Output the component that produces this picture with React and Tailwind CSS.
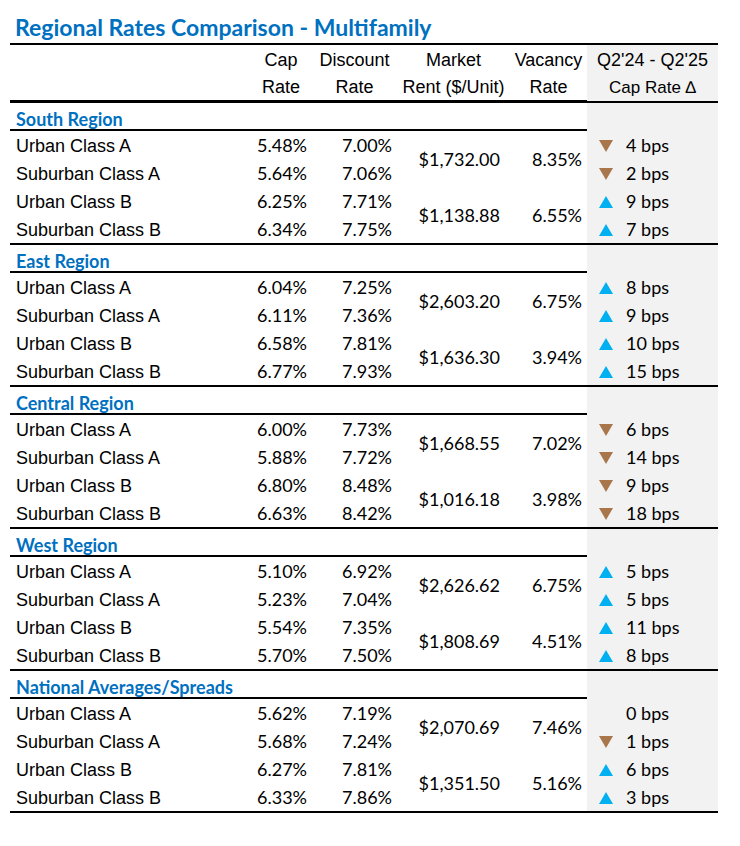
import React from 'react'

const regions = [
  {
    name: 'South Region',
    rows: [
      ['Urban Class A', '5.48%', '7.00%', 'down', '4 bps'],
      ['Suburban Class A', '5.64%', '7.06%', 'down', '2 bps'],
      ['Urban Class B', '6.25%', '7.71%', 'up', '9 bps'],
      ['Suburban Class B', '6.34%', '7.75%', 'up', '7 bps'],
    ],
    pairs: [['$1,732.00', '8.35%'], ['$1,138.88', '6.55%']],
  },
  {
    name: 'East Region',
    rows: [
      ['Urban Class A', '6.04%', '7.25%', 'up', '8 bps'],
      ['Suburban Class A', '6.11%', '7.36%', 'up', '9 bps'],
      ['Urban Class B', '6.58%', '7.81%', 'up', '10 bps'],
      ['Suburban Class B', '6.77%', '7.93%', 'up', '15 bps'],
    ],
    pairs: [['$2,603.20', '6.75%'], ['$1,636.30', '3.94%']],
  },
  {
    name: 'Central Region',
    rows: [
      ['Urban Class A', '6.00%', '7.73%', 'down', '6 bps'],
      ['Suburban Class A', '5.88%', '7.72%', 'down', '14 bps'],
      ['Urban Class B', '6.80%', '8.48%', 'down', '9 bps'],
      ['Suburban Class B', '6.63%', '8.42%', 'down', '18 bps'],
    ],
    pairs: [['$1,668.55', '7.02%'], ['$1,016.18', '3.98%']],
  },
  {
    name: 'West Region',
    rows: [
      ['Urban Class A', '5.10%', '6.92%', 'up', '5 bps'],
      ['Suburban Class A', '5.23%', '7.04%', 'up', '5 bps'],
      ['Urban Class B', '5.54%', '7.35%', 'up', '11 bps'],
      ['Suburban Class B', '5.70%', '7.50%', 'up', '8 bps'],
    ],
    pairs: [['$2,626.62', '6.75%'], ['$1,808.69', '4.51%']],
  },
  {
    name: 'National Averages/Spreads',
    rows: [
      ['Urban Class A', '5.62%', '7.19%', null, '0 bps'],
      ['Suburban Class A', '5.68%', '7.24%', 'down', '1 bps'],
      ['Urban Class B', '6.27%', '7.81%', 'up', '6 bps'],
      ['Suburban Class B', '6.33%', '7.86%', 'up', '3 bps'],
    ],
    pairs: [['$2,070.69', '7.46%'], ['$1,351.50', '5.16%']],
  },
]

const cols = 'grid grid-cols-[240px_62px_85px_113px_77px_131px]'
const arial = 'font-["Liberation_Sans",Arial,sans-serif]'
const calibri = 'font-[Lato,"Open_Sans",sans-serif]'

function Arrow({ dir }) {
  if (!dir) return <span className="w-[14px] shrink-0" />
  return dir === 'up' ? (
    <svg className="shrink-0" width="14" height="12" viewBox="0 0 14 12">
      <polygon points="7,0 14,12 0,12" fill="#00B0F0" />
    </svg>
  ) : (
    <svg className="shrink-0" width="14" height="12" viewBox="0 0 14 12">
      <polygon points="0,0 14,0 7,12" fill="#A9754A" />
    </svg>
  )
}

function Line({ thick }) {
  return <div className={thick ? 'h-[3px] bg-black' : 'h-[2px] bg-black'} />
}

function Region({ region }) {
  return (
    <>
      <div className={`${cols} h-[26px]`}>
        <div className={`col-span-5 flex items-center pl-[6px] pt-[3px] text-[18px] font-bold text-[#0070C0] ${calibri}`}>
          {region.name}
        </div>
        <div className="bg-[#F2F2F2]" />
      </div>
      <Line />
      <div className={`${cols} grid-rows-[repeat(4,28px)] text-[18px] text-black`}>
        {region.rows.map((r, i) => (
          <React.Fragment key={i}>
            <div className={`flex items-center pl-[6px] pt-[3px] ${arial}`} style={{ gridRow: i + 1, gridColumn: 1 }}>
              {r[0]}
            </div>
            <div className={`flex items-center justify-end pr-[5px] pt-[1px] ${calibri}`} style={{ gridRow: i + 1, gridColumn: 2 }}>
              {r[1]}
            </div>
            <div className={`flex items-center justify-end pr-[5px] pt-[1px] ${calibri}`} style={{ gridRow: i + 1, gridColumn: 3 }}>
              {r[2]}
            </div>
            <div
              className={`flex items-center gap-[13px] bg-[#F2F2F2] pl-[12px] pt-[1px] ${calibri}`}
              style={{ gridRow: i + 1, gridColumn: 6 }}
            >
              <Arrow dir={r[3]} />
              <span>{r[4]}</span>
            </div>
          </React.Fragment>
        ))}
        {region.pairs.map((p, j) => (
          <React.Fragment key={'p' + j}>
            <div
              className={`flex items-center justify-end pr-[10px] pt-[1px] ${calibri}`}
              style={{ gridRow: `${j * 2 + 1} / span 2`, gridColumn: 4 }}
            >
              {p[0]}
            </div>
            <div
              className={`flex items-center justify-end pr-[5px] pt-[1px] ${calibri}`}
              style={{ gridRow: `${j * 2 + 1} / span 2`, gridColumn: 5 }}
            >
              {p[1]}
            </div>
          </React.Fragment>
        ))}
      </div>
      <Line />
    </>
  )
}

export default function App() {
  return (
    <div className="min-h-screen bg-white">
      <div className="ml-[10px] w-[708px]">
        <div className={`h-[43px] pl-[5px] pt-[14px] text-[23px] font-bold leading-[26px] text-[#0070C0] ${calibri}`}>
          Regional Rates Comparison - Multifamily
        </div>
        <Line />
        <div className={`${cols} h-[55px] text-[18px] leading-[27px] text-black ${arial}`}>
          <div />
          <div className="flex flex-col items-center justify-center pt-[2px]">
            <span>Cap</span>
            <span>Rate</span>
          </div>
          <div className="flex flex-col items-center justify-center pt-[2px]">
            <span>Discount</span>
            <span>Rate</span>
          </div>
          <div className="flex flex-col items-center justify-center pt-[2px]">
            <span>Market</span>
            <span>Rent ($/Unit)</span>
          </div>
          <div className="flex flex-col items-center justify-center pt-[2px]">
            <span>Vacancy</span>
            <span>Rate</span>
          </div>
          <div className="flex flex-col items-center justify-center bg-[#F2F2F2] pt-[1px]">
            <span>Q2'24 - Q2'25</span>
            <span className="text-[17px]">Cap Rate ∆</span>
          </div>
        </div>
        <Line thick />
        {regions.map((r) => (
          <Region key={r.name} region={r} />
        ))}
      </div>
    </div>
  )
}
